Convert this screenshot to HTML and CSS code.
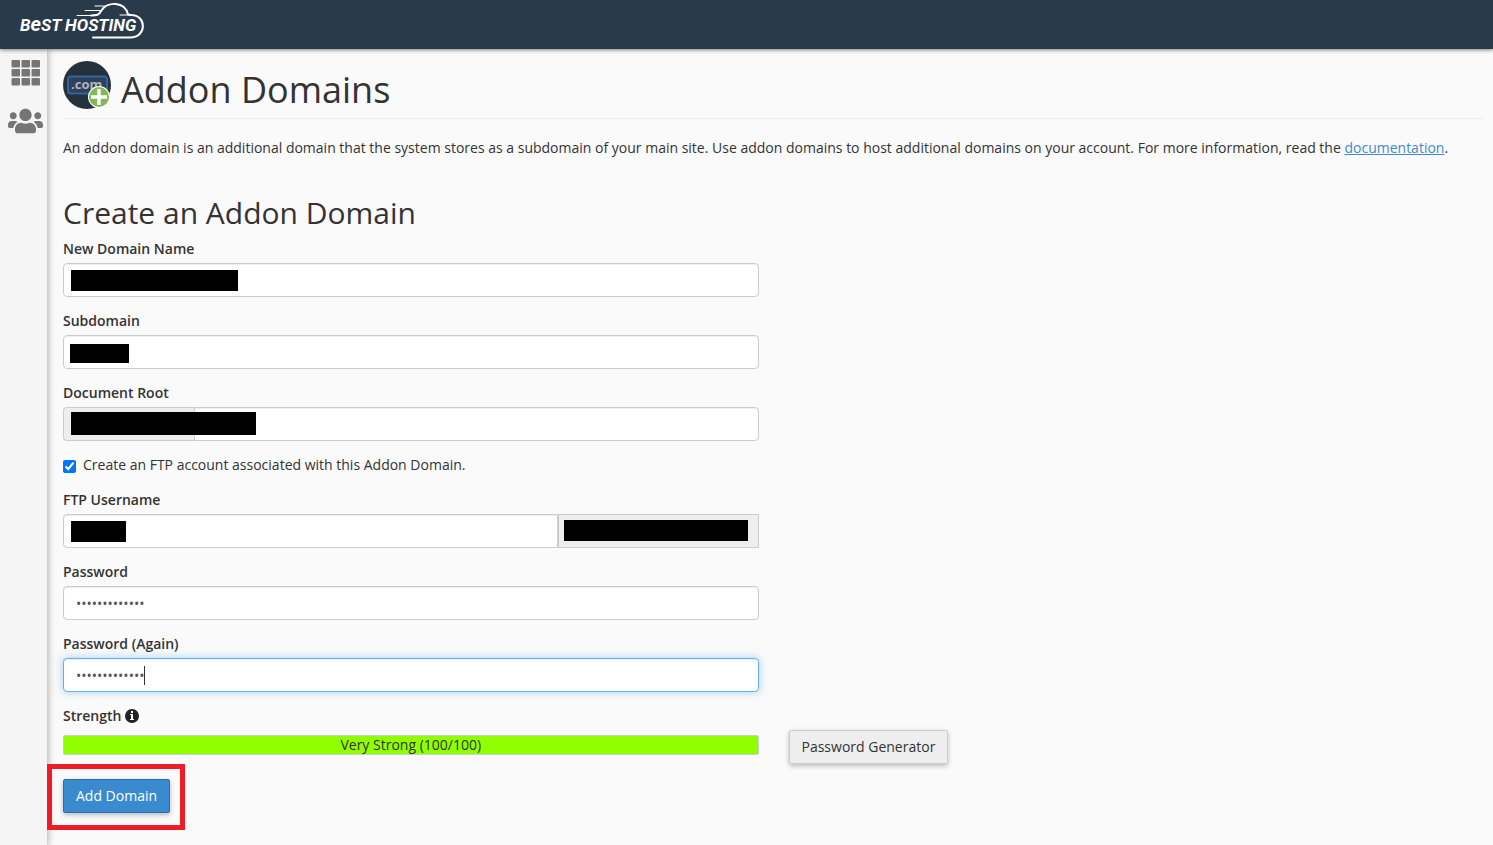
FILE: index.html
```
<!DOCTYPE html>
<html lang="en">
	<head>
		<meta charset="UTF-8">
		<meta name="viewport" content="width=device-width, initial-scale=1">
		<title>Addon Domains</title>
		<link rel="stylesheet" href="styles.css">
	</head>

	<body>
		<header class="top-bar">
			<a class="logo" href="#" aria-label="Best Hosting">
				<svg width="126" height="38" viewBox="0 0 126 38">
					<g fill="none" stroke="#fff" stroke-linecap="round" stroke-linejoin="round">
						<path stroke-width="2" d="M74 35.500H111C128 35.500 128 13 112 13L109 12.500C106 -1 88 -1 82 9C80 13 78 13.500 72 13.500"/>
						<path stroke-width="1" d="M76 4H86M66 8.500H82M58 13.500H74M101 13H112"/>
					</g>
					<text class="logo-text" x="1" y="29">B<tspan class="logo-low">e</tspan>ST HOST<tspan>ING</tspan></text>
				</svg>
			</a>
		</header>

		<div class="layout">
			<!-- side menu -->
			<nav class="side" aria-label="Main">
				<a href="#" aria-label="Home">
					<svg width="30" height="26" viewBox="0 0 30 26" fill="#757575">
						<rect x="0.500" y="0" width="8.500" height="7.500" rx="1"/>
						<rect x="10.500" y="0" width="8.500" height="7.500" rx="1"/>
						<rect x="20.500" y="0" width="8.500" height="7.500" rx="1"/>
						<rect x="0.500" y="9" width="8.500" height="7.500" rx="1"/>
						<rect x="10.500" y="9" width="8.500" height="7.500" rx="1"/>
						<rect x="20.500" y="9" width="8.500" height="7.500" rx="1"/>
						<rect x="0.500" y="18" width="8.500" height="7.500" rx="1"/>
						<rect x="10.500" y="18" width="8.500" height="7.500" rx="1"/>
						<rect x="20.500" y="18" width="8.500" height="7.500" rx="1"/>
					</svg>
				</a>
				<a href="#" aria-label="Users">
					<svg width="35" height="28" viewBox="0 0 640 512" fill="#757575">
						<path d="M96 224c35.300 0 64-28.700 64-64s-28.700-64-64-64-64 28.700-64 64 28.700 64 64 64zm448 0c35.300 0 64-28.700 64-64s-28.700-64-64-64-64 28.700-64 64 28.700 64 64 64zm32 32h-64c-17.600 0-33.500 7.100-45.100 18.600 40.300 22.100 68.900 62 75.100 109.400h66c17.700 0 32-14.300 32-32v-32c0-35.300-28.700-64-64-64zm-256 0c61.900 0 112-50.100 112-112S381.900 32 320 32 208 82.100 208 144s50.100 112 112 112zm76.800 32h-8.300c-20.800 10-43.900 16-68.500 16s-47.600-6-68.500-16h-8.300C179.600 288 128 339.600 128 403.200V432c0 26.500 21.500 48 48 48h288c26.500 0 48-21.500 48-48v-28.800c0-63.600-51.600-115.200-115.200-115.200zm-223.700-13.400C161.500 263.100 145.600 256 128 256H64c-35.300 0-64 28.700-64 64v32c0 17.700 14.300 32 32 32h65.900c6.300-47.400 34.900-87.300 75.200-109.400z"/>
					</svg>
				</a>
			</nav>

			<main class="content">
				<div class="page-header">
					<svg width="48" height="48" viewBox="0 0 48 48" aria-hidden="true">
						<circle cx="24" cy="24" r="24" fill="#25323c"/>
						<rect x="5" y="15.500" width="39" height="17" rx="3" fill="#2f405d" stroke="#30659a" stroke-width="2"/>
						<text class="com" x="8" y="28">.com</text>
						<circle cx="36" cy="36" r="11" fill="#fff"/>
						<circle cx="36" cy="36" r="10" fill="#84b856"/>
						<path d="M36 28V44M28 36H44" stroke="#fff" stroke-width="3.500"/>
					</svg>
					<h1>Addon Domains</h1>
				</div>

				<p class="desc">An addon domain is an additional domain that the system stores as a subdomain of your main site. Use addon domains to host additional domains on your account. For more information, read the <a href="#">documentation</a>.</p>

				<h2>Create an Addon Domain</h2>
				<form>
					<div class="row">
						<div class="fields">
							<div class="group">
								<label for="domain">New Domain Name</label>
								<div class="control">
									<input type="text" id="domain">
									<span class="mask mask-domain"></span>
								</div>
							</div>
							<div class="group">
								<label for="subdomain">Subdomain</label>
								<div class="control">
									<input type="text" id="subdomain">
									<span class="mask mask-sub"></span>
								</div>
							</div>
							<div class="group">
								<label for="root">Document Root</label>
								<div class="control">
									<span class="addon addon-left"></span>
									<input type="text" id="root">
									<span class="mask mask-root"></span>
								</div>
							</div>
							<div class="check">
								<input type="checkbox" id="ftp" checked>
								<label for="ftp">Create an FTP account associated with this Addon Domain.</label>
							</div>
							<div class="group">
								<label for="username">FTP Username</label>
								<div class="control">
									<input type="text" id="username">
									<span class="addon addon-right"><span class="mask mask-host"></span></span>
									<span class="mask mask-user"></span>
								</div>
							</div>
							<div class="group">
								<label for="pass">Password</label>
								<div class="control">
									<input type="password" id="pass" value="abcdefghijklm">
								</div>
							</div>
							<div class="group">
								<label for="pass2">Password (Again)</label>
								<div class="control">
									<input type="password" id="pass2" value="abcdefghijklm" autofocus>
									<span class="caret"></span>
								</div>
							</div>
						</div>
					</div>
					<div class="row">
						<div class="strength">
							<div class="strength-label">Strength
								<svg width="14" height="14" viewBox="0 0 14 14" aria-hidden="true">
									<circle cx="7" cy="7" r="7" fill="#222"/>
									<path fill="#fff" d="M6 2h2v2H6zM5 5h3v5h1v1H5v-1h1V6H5z"/>
								</svg>
							</div>
							<div class="bar">Very Strong (100/100)</div>
						</div>
						<div class="generator">
							<button type="button" class="btn">Password Generator</button>
						</div>
					</div>
					<div class="submit">
						<button type="button" class="btn btn-primary">Add Domain</button>
					</div>
				</form>
			</main>
		</div>
	</body>

</html>
```
FILE: styles.css
```
* {
	box-sizing: border-box;
}

body,
h1,
h2,
p {
	margin: 0;
	padding: 0;
}

body {
	display: flex;
	flex-direction: column;
	min-height: 100vh;
	background: #fafafa;
}

body,
input,
button {
	font-family: "Open Sans", "Liberation Sans", sans-serif;
	font-size: 14px;
	line-height: 20px;
	color: #333;
}

svg {
	display: block;
}

/*header*/
.top-bar {
	position: relative;
	height: 49px;
	padding: 2px 19px;
	background: #293a4a;
	box-shadow: 0 1px 4px rgba(0, 0, 0, .5);
}

.logo {
	display: inline-block;
}

.logo-text {
	font-family: Roboto, sans-serif;
	font-size: 17px;
	font-weight: 700;
	font-style: italic;
	fill: #fff;
}

.logo-low {
	font-size: 20px;
}

/*side menu*/
.layout {
	display: flex;
	flex: 1;
}

.side {
	display: flex;
	flex-direction: column;
	align-items: center;
	gap: 21px;
	width: 47px;
	padding: 11px 0 0 4px;
	background: #f5f5f5;
	box-shadow: 0 0 8px rgba(0, 0, 0, .4);
}

/*content*/
.content {
	flex: 1;
	min-width: 0;
	padding: 12px 9px 15px 16px;
}

.page-header {
	display: flex;
	gap: 10px;
	padding-bottom: 8px;
	border-bottom: 1px solid #eee;
}

h1,
h2 {
	font-weight: 400;
}

h1 {
	padding-top: 9px;
	font-size: 36px;
	line-height: 40px;
}

h2 {
	margin-bottom: 10px;
	font-size: 30px;
	line-height: 33px;
}

.com {
	font-size: 13px;
	font-weight: 700;
	fill: #b5b5b5;
}

.desc {
	margin: 19px 0 38px;
}

.desc a {
	color: #428bca;
}

.row {
	display: grid;
	grid-template-columns: 1fr 1fr;
	gap: 30px;
}

.group {
	margin-bottom: 14px;
}

.group label,
.strength-label {
	display: block;
	margin-bottom: 4px;
	font-weight: 600;
}

.control {
	position: relative;
	display: flex;
}

.control input {
	flex: 1;
	min-width: 0;
	height: 34px;
	padding: 6px 12px;
	border: 1px solid #ccc;
	border-radius: 4px;
	background: #fff;
	box-shadow: inset 0 1px 1px rgba(0, 0, 0, .075);
	color: #555;
	outline: 0;
	caret-color: transparent;
}

.control input:focus {
	border-color: #66afe9;
	box-shadow: inset 0 1px 1px rgba(0, 0, 0, .075), 0 0 8px rgba(102, 175, 233, .6);
}

.caret {
	position: absolute;
	top: 8px;
	left: 81px;
	width: 1px;
	height: 19px;
	background: #333;
}

.addon {
	border: 1px solid #ccc;
	background: #eee;
}

.addon-left {
	width: 131px;
	border-right: 0;
	border-radius: 4px 0 0 4px;
}

.addon-left + input {
	border-radius: 0 4px 4px 0;
}

.addon-right {
	position: relative;
	width: 201px;
}

.control #username {
	border-radius: 4px 0 0 4px;
}

/*hidden values*/
.mask {
	position: absolute;
	top: 7px;
	left: 8px;
	height: 21px;
	background: #000;
}

.mask-domain {
	width: 167px;
}

.mask-sub {
	top: 9px;
	left: 7px;
	width: 59px;
	height: 19px;
}

.mask-root {
	top: 5px;
	width: 185px;
	height: 23px;
}

.mask-user {
	width: 55px;
}

.mask-host {
	top: 5px;
	left: 5px;
	width: 184px;
}

.check {
	display: flex;
	align-items: center;
	gap: 7px;
	margin-bottom: 15px;
}

.check input {
	width: 13px;
	height: 13px;
	margin: 2px 0 0;
}

.strength-label {
	display: flex;
	align-items: center;
	gap: 4px;
	margin-bottom: 9px;
}

.bar {
	height: 20px;
	border: 1px solid #ccc;
	border-radius: 2px;
	background: #90ff00;
	line-height: 18px;
	text-align: center;
}

.generator {
	padding-top: 24px;
}

.btn {
	display: block;
	height: 34px;
	padding: 6px 12px;
	border: 1px solid #ccc;
	border-radius: 2px;
	background: #eee;
	box-shadow: 0 2px 5px rgba(0, 0, 0, .26);
	white-space: nowrap;
}

.btn-primary {
	border-color: #2a6fb3;
	background: #3a8acf;
	color: #fff;
}

/*red frame around the submit button*/
.submit {
	width: fit-content;
	margin-left: -16px;
	padding: 10px 10px 12px 11px;
	border: 5px solid #ee1c25;
}
```
